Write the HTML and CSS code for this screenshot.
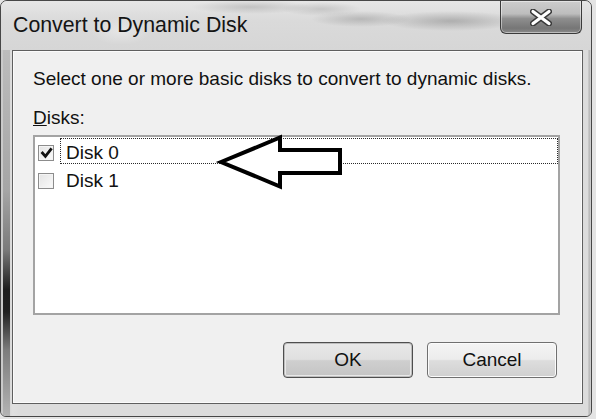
FILE: index.html
```html
<!DOCTYPE html>
<html>
<head>
<meta charset="utf-8">
<title>Convert to Dynamic Disk</title>
<link rel="stylesheet" href="styles.css">
</head>
<body>
<div class="window">
  <div class="titlebar">
    <span class="title">Convert to Dynamic Disk</span>
    <div class="close" aria-label="Close">
      <svg width="22" height="17" viewBox="0 0 22 17">
        <path d="M3 2.5 L19 14.5 M19 2.5 L3 14.5" stroke="#3a3a3a" stroke-width="6" stroke-linecap="round" fill="none"/>
        <path d="M3 2.5 L19 14.5 M19 2.5 L3 14.5" stroke="#ffffff" stroke-width="3.2" stroke-linecap="round" fill="none"/>
      </svg>
    </div>
  </div>
  <div class="frame">
    <div class="client">
      <p class="intro">Select one or more basic disks to convert to dynamic disks.</p>
      <p class="label"><span class="accel">D</span>isks:</p>
      <div class="listbox">
        <div class="row">
          <span class="check checked">
            <svg width="16" height="16" viewBox="0 0 16 16"><path d="M3.6 7 L7.4 11.4 L13.6 3.4" stroke="#111" stroke-width="2.8" fill="none"/></svg>
          </span>
          <span class="item focused">Disk 0</span>
        </div>
        <div class="row">
          <span class="check"></span>
          <span class="item">Disk 1</span>
        </div>
      </div>
      <div class="buttons">
        <button class="btn default">OK</button>
        <button class="btn">Cancel</button>
      </div>
    </div>
  </div>
  <svg class="arrow" width="596" height="419" viewBox="0 0 596 419">
    <polygon points="221,162 280,137.5 280,150 340,150 340,173 280,173 280,186.5" fill="#ffffff" stroke="#000000" stroke-width="4" stroke-linejoin="miter"/>
  </svg>
</div>
</body>
</html>
```
FILE: styles.css
```css
* { box-sizing: border-box; }
html, body { margin: 0; padding: 0; }
body {
  width: 596px;
  height: 419px;
  overflow: hidden;
  background: #e4e4e4;
  font-family: "Liberation Sans", Arial, sans-serif;
  color: #111111;
}
.window {
  position: relative;
  width: 592px;
  height: 417px;
  border: 1px solid #474747;
  border-radius: 7px 7px 6px 6px;
  display: flex;
  flex-direction: column;
  overflow: hidden;
  background: #d9d9d9;
}
.titlebar {
  flex: none;
  height: 49px;
  display: flex;
  justify-content: space-between;
  align-items: flex-start;
  padding-left: 12px;
  background:
    radial-gradient(60px 7px at 250px 6px, rgba(0,0,0,.14), transparent),
    radial-gradient(50px 8px at 360px 18px, rgba(0,0,0,.16), transparent),
    radial-gradient(70px 10px at 450px 20px, rgba(0,0,0,.2), transparent),
    radial-gradient(40px 7px at 320px 8px, rgba(0,0,0,.12), transparent),
    radial-gradient(30px 14px at 120px 30px, rgba(255,255,255,.35), transparent),
    linear-gradient(to bottom, #e6e6e6 0, #dadada 40%, #d6d6d6 100%);
}
.title {
  font-size: 21.3px;
  line-height: 24px;
  margin-top: 12px;
  color: #141414;
}
.close {
  width: 82px;
  height: 33px;
  margin-right: 9px;
  border: 1px solid #3b3b3b;
  border-top: none;
  border-radius: 0 0 6px 6px;
  display: flex;
  align-items: center;
  justify-content: center;
  padding-top: 1px;
  box-shadow: inset 0 0 0 1px rgba(255,255,255,.45);
  background: linear-gradient(to bottom, #cdcdcd 0, #bdbdbd 40%, #8e8e8e 55%, #767676 85%, #8a8a8a 100%);
}
.frame {
  flex: 1;
  display: flex;
  padding: 0 8px 12px 11px;
  background:
    linear-gradient(to bottom, #bcbcbc 0, #a6a6a6 140px, #7a7a7a 200px, #1c1c1c 240px, #202020 262px, #7c7c7c 300px, #b4b4b4 366px) 2px 0 / 7px 100% no-repeat,
    linear-gradient(to right, #c9c9c9 0, #c9c9c9 1px, #d8d8d8 9px, #e0e0e0 11px, #dcdcdc 20px, #dcdcdc calc(100% - 3px), #b3b3b3 calc(100% - 2px), #d5d5d5 100%);
}
.client {
  flex: 1;
  display: flex;
  flex-direction: column;
  border: 1px solid #5f5f5f;
  box-shadow: inset 0 0 0 1px #fbfbfb;
  background: #f0f0f0;
  padding: 17px 22px 0 20px;
}
.intro, .label {
  margin: 0;
  font-size: 19px;
  line-height: 22px;
}
.label { margin-top: 17px; }
.accel { text-decoration: underline; }
.listbox {
  margin-top: 6px;
  height: 180px;
  border: 2px solid #a3a3a3;
  background: #ffffff;
  padding: 1px 0 0 0;
}
.row {
  height: 28px;
  display: flex;
  align-items: flex-start;
  padding-left: 3px;
}
.check {
  width: 16px;
  height: 16px;
  margin-top: 7px;
  margin-right: 6px;
  flex: none;
  border: 1px solid #8c8c8c;
  background: linear-gradient(135deg, #e4e4e4 0, #fafafa 100%);
  box-shadow: inset 0 0 0 1px #f4f4f4;
  display: flex;
}
.check svg { margin: -1px; }
.item {
  flex: 1;
  height: 26px;
  border: 1px solid transparent;
  padding: 2px 0 0 5px;
  font-size: 19px;
  line-height: 23px;
  color: #111111;
}
.item.focused { border: 1px dotted #2a2a2a; }
.buttons {
  margin-top: 27px;
  display: flex;
  justify-content: flex-end;
  gap: 14px;
  padding-right: 3px;
}
.btn {
  width: 130px;
  height: 36px;
  font-family: "Liberation Sans", Arial, sans-serif;
  font-size: 19px;
  color: #111111;
  border: 1px solid #707070;
  border-radius: 4px;
  box-shadow: inset 0 0 0 1px #fbfbfb;
  background: linear-gradient(to bottom, #f4f4f4 0, #ececec 48%, #dddddd 52%, #d0d0d0 100%);
  padding: 0;
}
.btn.default {
  border-color: #4e4e4e;
  box-shadow: inset 0 0 0 1px #bdbdbd, inset 0 0 0 2px #e8e8e8;
  background: linear-gradient(to bottom, #e8e8e8 0, #e0e0e0 48%, #cfcfcf 52%, #c4c4c4 100%);
}
.arrow {
  position: absolute;
  left: -1px;
  top: -1px;
  pointer-events: none;
}
```
